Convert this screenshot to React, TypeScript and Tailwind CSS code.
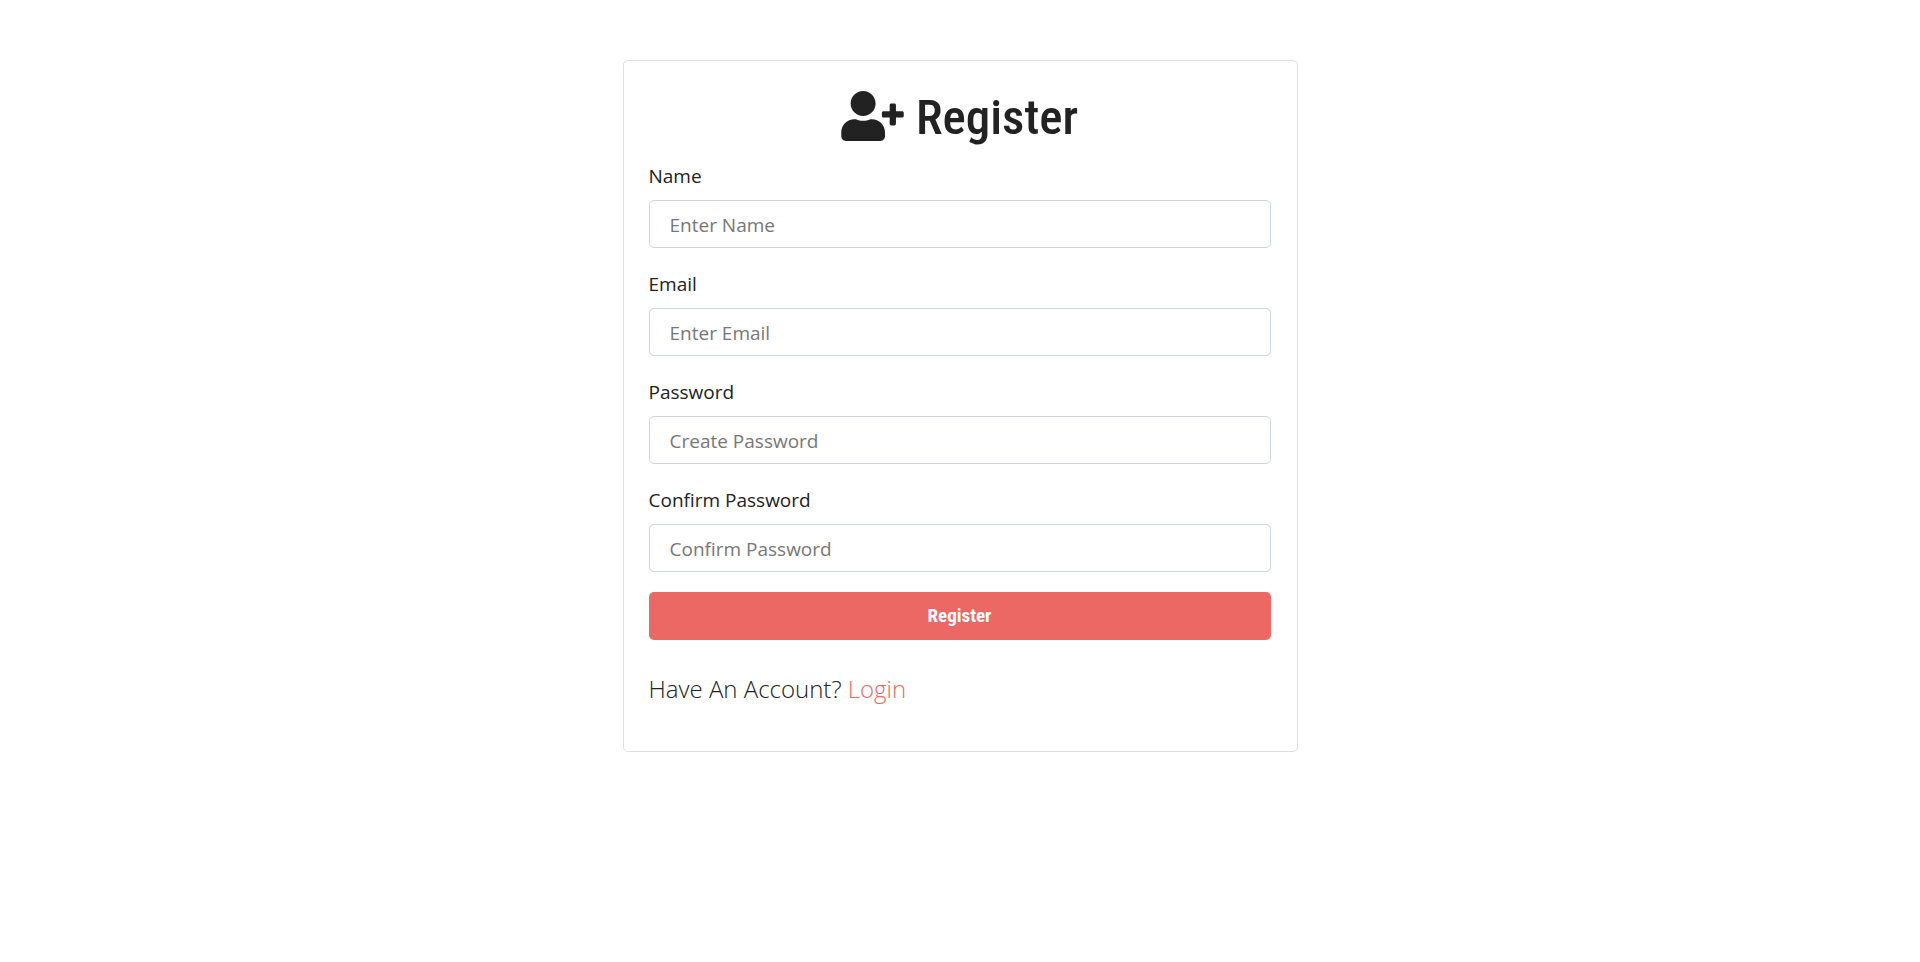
import { FaUserPlus } from "react-icons/fa";

const fields = [
  { id: "name", label: "Name", type: "text", placeholder: "Enter Name" },
  { id: "email", label: "Email", type: "email", placeholder: "Enter Email" },
  { id: "password", label: "Password", type: "password", placeholder: "Create Password" },
  { id: "password2", label: "Confirm Password", type: "password", placeholder: "Confirm Password" },
];

export default function App() {
  return (
    <main className="min-h-screen bg-white px-4 pt-[60px] pb-10 font-['Open_Sans','Noto_Sans',sans-serif] text-[#222222]">
      <section className="mx-auto w-full max-w-[675px] rounded-[5px] border border-[#dfdfdf] bg-white py-[25px] pr-[26px] pl-[25px]">
        <h1 className="mb-[14px] flex items-center justify-center gap-3 font-['Roboto_Condensed','Lato',sans-serif] text-[49px] leading-[60px] font-medium">
          <FaUserPlus className="h-[50px] w-[63px]" aria-hidden="true" />
          <span className="pt-1 leading-[56px]">Register</span>
        </h1>
        <form onSubmit={(event) => event.preventDefault()}>
          {fields.map((field) => (
            <div key={field.id} className="mb-5">
              <label htmlFor={field.id} className="mb-2 block text-[19px] leading-[32px]">
                {field.label}
              </label>
              <input
                id={field.id}
                name={field.id}
                type={field.type}
                placeholder={field.placeholder}
                className="block h-12 w-full rounded-[5px] border border-[#ced4da] bg-white px-5 pt-[2px] text-[19px] text-[#495057] placeholder:text-[#777777] focus:outline-2 focus:outline-[#eb6864]"
              />
            </div>
          ))}
          <button
            type="submit"
            className="block h-12 w-full cursor-pointer rounded-[5px] bg-[#eb6864] text-center font-['Roboto_Condensed','Lato',sans-serif] text-[19px] leading-[28px] font-bold text-white"
          >
            Register
          </button>
        </form>
        <p className="mt-[30px] mb-[18px] text-[24px] leading-[38px] font-light">
          Have An Account?{" "}
          <a href="#login" className="text-[#eb6864]">
            Login
          </a>
        </p>
      </section>
    </main>
  );
}
